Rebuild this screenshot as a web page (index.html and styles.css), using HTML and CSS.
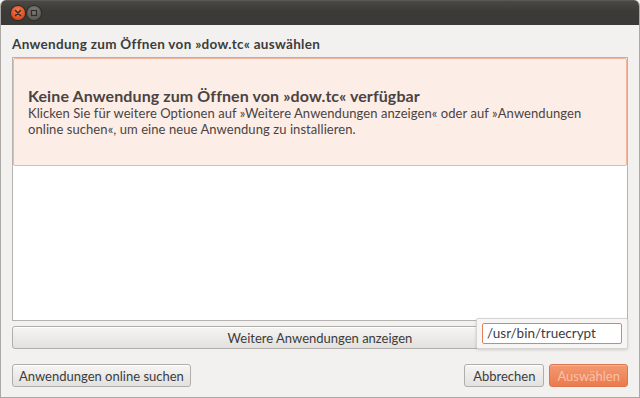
FILE: index.html
```html
<!DOCTYPE html>
<html lang="de">
<head>
<meta charset="utf-8">
<link rel="stylesheet" href="styles.css">
</head>
<body>
<div class="window">
  <div class="titlebar">
    <span class="tb-btn close">
      <svg width="8" height="8" viewBox="0 0 8 8"><path d="M1.5 1.5 L6.5 6.5 M6.5 1.5 L1.5 6.5" stroke="#3a2a22" stroke-width="1.5" stroke-linecap="round"/></svg>
    </span>
    <span class="tb-btn max">
      <svg width="8" height="8" viewBox="0 0 8 8"><rect x="1.5" y="1.5" width="5" height="5" fill="none" stroke="#2e2d2a" stroke-width="1.2"/></svg>
    </span>
  </div>
  <div class="body">
    <div class="heading">Anwendung zum Öffnen von »dow.tc« auswählen</div>
    <div class="frame">
      <div class="infobar">
        <div class="info-title">Keine Anwendung zum Öffnen von »dow.tc« verfügbar</div>
        <div class="info-text">Klicken Sie für weitere Optionen auf »Weitere Anwendungen anzeigen« oder auf »Anwendungen online suchen«, um eine neue Anwendung zu installieren.</div>
      </div>
      <div class="list"></div>
    </div>
    <div class="more-row">
      <button class="btn wide">Weitere Anwendungen anzeigen</button>
      <div class="popup"><div class="entry">/usr/bin/truecrypt</div></div>
    </div>
    <div class="actions">
      <button class="btn">Anwendungen online suchen</button>
      <div class="spacer"></div>
      <button class="btn cancel">Abbrechen</button>
      <button class="btn primary">Auswählen</button>
    </div>
  </div>
</div>
</body>
</html>
```
FILE: styles.css
```css
* { box-sizing: border-box; }
html, body { margin: 0; padding: 0; }
body {
  width: 640px; height: 398px; overflow: hidden;
  background: #f2f1f0;
  font-family: "Lato", "Noto Sans", sans-serif;
  font-size: 13px;
  color: #3c3c3c;
}
.window {
  width: 640px; height: 398px;
  display: flex; flex-direction: column;
  background: #f2f1f0;
  border-left: 1px solid #a9a8a5;
  border-right: 1px solid #a9a8a5;
  border-bottom: 1px solid #a9a8a5;
  border-radius: 6px 6px 0 0;
  overflow: hidden;
}
.titlebar {
  height: 25px; flex: none;
  background: linear-gradient(#4a4944, #3c3b37 40%, #3a3935);
  border-top: 1px solid #5a5954;
  display: flex; align-items: center;
  padding-left: 10px; gap: 2px;
}
.tb-btn {
  width: 14px; height: 14px; border-radius: 50%;
  display: flex; align-items: center; justify-content: center;
}
.close { background: radial-gradient(circle at 50% 35%, #f47a4e, #df4a1f 70%); box-shadow: 0 0 0 1px #2e2d29; }
.max { background: radial-gradient(circle at 50% 35%, #7f7e79, #5c5b56 70%); box-shadow: 0 0 0 1px #2e2d29; }
.body {
  flex: 1; display: flex; flex-direction: column;
  padding: 11px 11px 10px 11px;
}
.heading {
  font-weight: bold; font-size: 13.5px; color: #3c3c3c;
  height: 21px; line-height: 16px;
  letter-spacing: 0.3px;
}
.frame {
  height: 264px; flex: none;
  border: 1px solid #b5b3b0;
  display: flex; flex-direction: column;
  background: #fff;
}
.infobar {
  height: 108px; flex: none;
  background: #fdede7;
  border: 1px solid #f2b5a0;
  border-radius: 2px;
  display: flex; flex-direction: column; justify-content: center;
  padding: 0 14px;
}
.info-title { font-weight: bold; font-size: 16px; line-height: 18px; color: #4a4441; letter-spacing: 0.1px; }
.info-text { font-size: 13px; line-height: 16px; color: #4a4441; letter-spacing: 0.07px; }
.list { flex: 1; background: #fff; }
.more-row {
  position: relative;
  margin-top: 5px; height: 23px; flex: none;
  display: flex;
}
.btn {
  font-family: inherit; font-size: 13px; color: #3c3c3c;
  height: 23px; padding: 0 6px;
  border: 1px solid #b0aeab; border-radius: 3px;
  background: linear-gradient(#f6f5f4, #e3e1de);
  box-shadow: inset 0 1px 0 #fff;
}
.btn.cancel { padding: 0 8px; margin-right: -2px; }
.btn.wide { flex: 1; }
.popup {
  position: absolute; right: 0; top: -8px;
  width: 152px; height: 31px;
  background: #f7f6f5;
  border: 1px solid #d6d4d1;
  border-radius: 2px;
  box-shadow: 0 1px 3px rgba(0,0,0,0.15);
  padding: 4px 5px;
}
.entry {
  height: 21px; background: #fff;
  border: 1px solid #e5815a; border-radius: 2px;
  padding: 0 4px; line-height: 19px;
  font-size: 13.5px; color: #3c3c3c;
}
.actions {
  margin-top: 15px; display: flex; gap: 7px;
}
.spacer { flex: 1; }
.btn.primary {
  padding: 0 7px;
  background: linear-gradient(#f29a72, #ec7a4c);
  border-color: #d9764e;
  color: #f7c2ab;
  box-shadow: inset 0 1px 0 #f6b596;
}
```
